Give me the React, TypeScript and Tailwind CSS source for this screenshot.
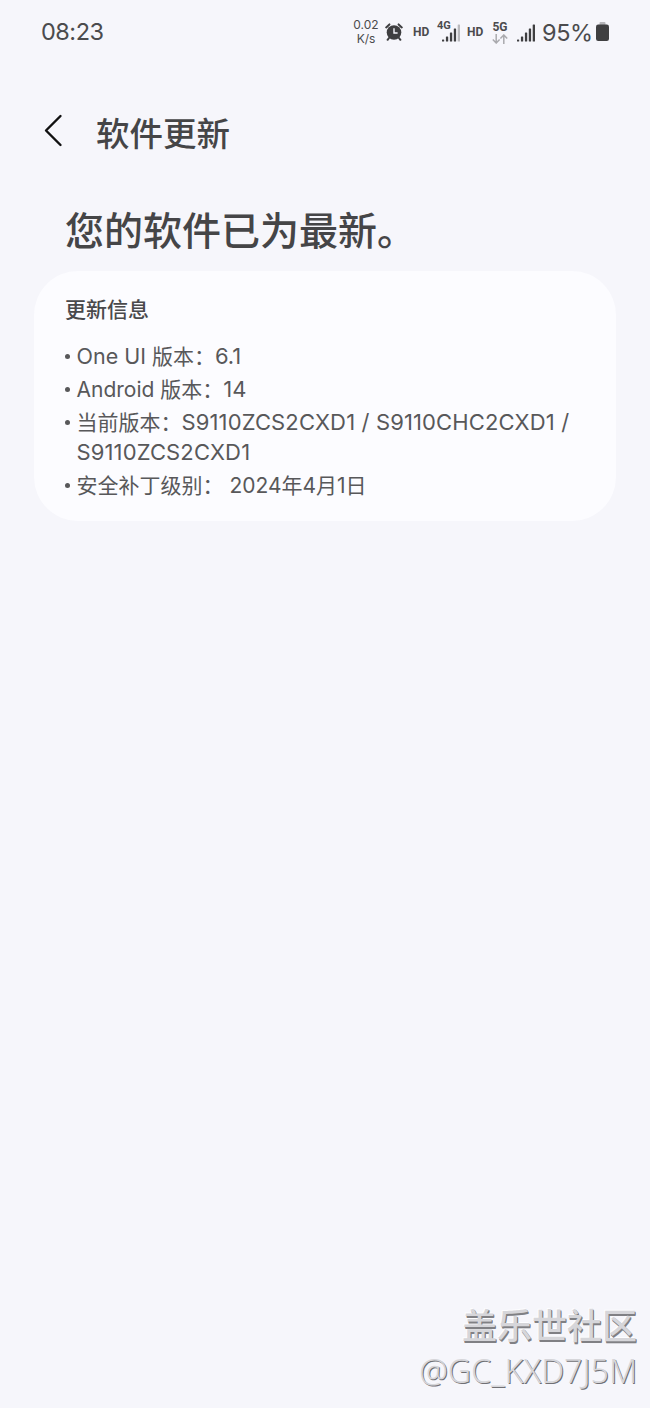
import { ReactNode } from 'react';

interface InfoRowProps {
  children: ReactNode;
}

function InfoRow({ children }: InfoRowProps) {
  return (
    <li className="flex">
      <span className="mt-[12px] mr-[6.5px] h-[5px] w-[5px] shrink-0 rounded-full bg-[#58585a]" />
      <div>{children}</div>
    </li>
  );
}

function AlarmIcon() {
  return (
    <svg viewBox="0 0 18 18" className="h-[18px] w-[18px]">
      <circle cx="9" cy="9.5" r="7.3" fill="#3f3f41" />
      <path d="M1.2 4.4 4.4 1.4M16.8 4.4 13.6 1.4M4 15l-1.4 1.8M14 15l1.4 1.8" stroke="#3f3f41" strokeWidth="2" strokeLinecap="round" />
      <path d="M9 5.2v4.8h3.6" fill="none" stroke="#f6f6fb" strokeWidth="1.4" />
    </svg>
  );
}

function SignalIcon({ weak = false }: { weak?: boolean }) {
  return (
    <svg viewBox="0 0 18 18" className="h-[18px] w-[18px]" fill="#3f3f41">
      <rect x="0" y="15.4" width="2.2" height="2.2" rx="0.6" />
      <rect x="3.9" y="12.5" width="2.3" height="5.1" rx="0.6" />
      <rect x="7.9" y="8.5" width="2.3" height="9.1" rx="0.6" />
      <rect x="11.8" y="4.5" width="2.3" height="13.1" rx="0.6" />
      <rect x="15.7" y="0.5" width="2.3" height="17.1" rx="0.6" fill={weak ? '#b9b9bd' : '#3f3f41'} />
    </svg>
  );
}

function StatusBar() {
  return (
    <div className="flex h-16 items-start pt-[17px] pl-[41px] text-[#4b4b4d]">
      <span className="w-[312px] text-[23.5px] leading-[30px] tracking-[-0.5px]">08:23</span>
      <div className="mt-[1px] w-[26px] text-center text-[12px] leading-[14px]">
        <div>0.02</div>
        <div>K/s</div>
      </div>
      <div className="mt-[6px] ml-[6px]">
        <AlarmIcon />
      </div>
      <span className="mt-[7px] ml-[10px] w-[17px] font-[Roboto,sans-serif] text-[12px] leading-4 font-bold">HD</span>
      <div className="relative mt-[7px] ml-[12px]">
        <SignalIcon weak />
        <span className="absolute -top-[5px] -left-[5px] bg-[#f6f6fb] font-[Roboto,sans-serif] text-[11px] leading-[13px] font-bold">4G</span>
      </div>
      <span className="mt-[7px] ml-[7px] w-[17px] font-[Roboto,sans-serif] text-[12px] leading-4 font-bold">HD</span>
      <div className="mt-[4px] ml-[7px] w-[18px] text-center">
        <div className="font-[Roboto,sans-serif] text-[12px] leading-[13px] font-bold">5G</div>
        <svg viewBox="0 0 16 10" className="mx-auto h-[10px] w-4" fill="none" stroke="#aaaaae" strokeWidth="1.5">
          <path d="M4.2 0v8.8M.8 5.4l3.4 3.6 3.4-3.6M11.8 10V1.2M8.4 4.6 11.8 1l3.4 3.6" />
        </svg>
      </div>
      <div className="mt-[7px] ml-[8px]">
        <SignalIcon />
      </div>
      <span className="mt-[1px] ml-[7px] w-[54px] text-[23.5px] leading-[30px] tracking-[-0.4px]">95%</span>
      <svg viewBox="0 0 13 19" className="mt-[5px] h-[19px] w-[13px]">
        <rect x="3.5" width="6" height="4" rx="1" fill="#b5b5b9" />
        <rect y="2.5" width="13" height="16.5" rx="2.2" fill="#3f3f41" />
      </svg>
    </div>
  );
}

export default function App() {
  return (
    <div className="flex h-[1408px] w-[650px] flex-col bg-[#f6f6fb] font-[Inter,'Noto_Sans_CJK_SC',sans-serif]" lang="zh-CN">
      <StatusBar />

      <header className="mt-[42px] flex h-[50px] items-center pl-[44px]">
        <svg viewBox="0 0 19 34" className="h-[34px] w-[19px]" fill="none" stroke="#111" strokeWidth="2.4" strokeLinecap="round" strokeLinejoin="round">
          <path d="M16.5 2 2 16.5 16.5 31" />
        </svg>
        <h1 className="mt-[5px] ml-[33px] text-[33.5px] leading-[50px] font-medium text-[#454547]">软件更新</h1>
      </header>

      <h2 className="mt-[46px] pl-[65px] text-[39px] leading-[58px] font-medium text-[#454547]">您的软件已为最新。</h2>

      <section className="mt-[11px] ml-[34px] h-[250px] w-[582px] rounded-[44px] bg-[#fcfcff] pt-[24px] pl-[31px] text-[#58585a]">
        <h3 className="text-[21px] leading-[30px] font-medium text-[#49494b]">更新信息</h3>
        <ul className="mt-[17px] flex flex-col gap-[3px] text-[21px] leading-[30px]">
          <InfoRow>
            <span className="text-[21.5px] leading-none">One UI</span> 版本：<span className="text-[22px] leading-none">6.1</span>
          </InfoRow>
          <InfoRow>
            Android 版本：<span className="text-[22px] leading-none">14</span>
          </InfoRow>
          <InfoRow>
            当前版本：<span className="text-[22px] leading-none tracking-[0.13px]">S9110ZCS2CXD1 / S9110CHC2CXD1 /</span>
            <br />
            <span className="text-[22px] leading-none tracking-[0.13px]">S9110ZCS2CXD1</span>
          </InfoRow>
          <InfoRow>安全补丁级别： 2024年4月1日</InfoRow>
        </ul>
      </section>

      <footer className="mt-auto flex h-[105px] flex-col items-end pr-[13px] text-[#d6d6da] [text-shadow:1px_1px_0_#808084,1px_2px_0_#808084,-1px_-1px_0_#fdfdff]">
        <span className="text-[35px] leading-[46px] font-medium">盖乐世社区</span>
        <span className="font-['Noto_Sans',sans-serif] text-[32.2px] leading-[44px] font-light [text-shadow:1px_1px_0_#707074]">@GC_KXD7J5M</span>
      </footer>
    </div>
  );
}
